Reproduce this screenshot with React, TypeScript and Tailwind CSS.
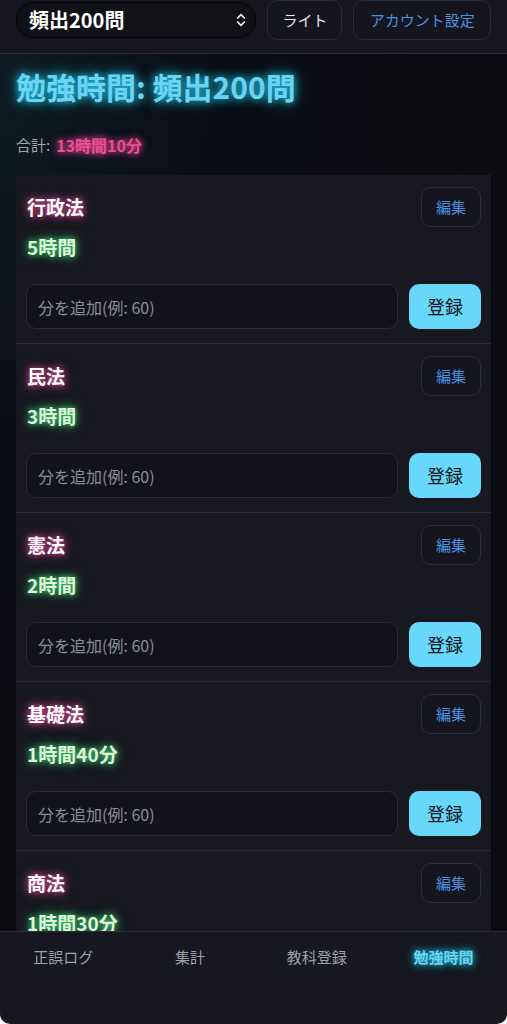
import React from "react";

const subjects = [
  { name: "行政法", time: "5時間" },
  { name: "民法", time: "3時間" },
  { name: "憲法", time: "2時間" },
  { name: "基礎法", time: "1時間40分" },
  { name: "商法", time: "1時間30分" },
];

const font = { fontFamily: '"Noto Sans CJK JP", "Noto Sans", sans-serif' };

function Card({ name, time }: { name: string; time: string }) {
  return (
    <div className="bg-[#181920] border-b border-[#2a2b36] px-[10px] pt-3 pb-[14px]">
      <div className="flex items-center justify-between h-10 pl-[1px]">
        <span className="text-[19px] font-semibold text-white [text-shadow:0_0_6px_#ec4899,0_0_12px_#ec489988]">
          {name}
        </span>
        <button className="h-10 w-[60px] rounded-[10px] border border-[#2c2e3a] text-[15px] text-[#4a8fe0] bg-[#15161d]">
          編集
        </button>
      </div>
      <div className="mt-[6px] pl-[1px] h-7 flex items-center text-[19px] font-bold text-[#dcf7d6] [text-shadow:0_0_6px_#4ade80,0_0_12px_#22c55e99]">
        {time}
      </div>
      <div className="mt-[23px] flex gap-[11px]">
        <div className="flex-1 h-[45px] rounded-[10px] border border-[#2a2b36] bg-[#12131a] flex items-center px-[11px] text-[16px] text-[#8b8d98]">
          分を追加(例: 60)
        </div>
        <button className="w-[72px] h-[45px] rounded-[10px] bg-[#67d8fa] text-[18px] text-[#11131a]">
          登録
        </button>
      </div>
    </div>
  );
}

export default function App() {
  return (
    <div style={font} className="h-[1024px] w-full overflow-hidden bg-white flex flex-col">
      <div className="flex-1 min-h-0 flex flex-col bg-[#0b0c12] overflow-hidden">
        <header className="h-[54px] shrink-0 bg-[#16171e] border-b border-[#2a2b36] flex items-start pl-4 pr-4 gap-[11px]">
          <div className="mt-[2px] w-[241px] h-[36px] rounded-full border border-[#050507] bg-[#111218] flex items-center justify-between pl-[12px] pr-[6px]">
            <span className="text-[20px] font-semibold text-white">頻出200問</span>
            <svg width="16" height="16" viewBox="0 0 24 24" fill="none" stroke="#e5e7eb" strokeWidth="2.6" strokeLinecap="round" strokeLinejoin="round">
              <path d="M7 9l5-5 5 5" />
              <path d="M7 15l5 5 5-5" />
            </svg>
          </div>
          <button className="h-[40px] w-[75px] rounded-[10px] border border-[#2a2b36] bg-[#15161d] text-[15px] text-[#e5e7eb]">
            ライト
          </button>
          <button className="h-[40px] w-[138px] rounded-[10px] border border-[#2a2b36] bg-[#15161d] text-[15px] text-[#4a8fe0]">
            アカウント設定
          </button>
        </header>
        <main className="flex-1 min-h-0 overflow-hidden bg-[radial-gradient(ellipse_at_0%_0%,#0f1c23_0%,#0c0e15_30%,#0b0c12_70%)]">
          <h1 className="px-4 mt-[13px] text-[30px] leading-[38px] font-bold text-[#6dd3f5] [text-shadow:0_0_8px_#22d3ee,0_0_16px_#06b6d488]">
            勉強時間: 頻出200問
          </h1>
          <div className="px-4 mt-[30px] h-5 flex items-center gap-[6px] text-[15px] text-[#a1a3ad]">
            <span>合計:</span>
            <span className="text-[16px] font-bold text-[#ee4d90] [text-shadow:0_0_6px_#ec4899,0_0_10px_#ec489988]">
              13時間10分
            </span>
          </div>
          <div className="ml-4 mr-4 mt-[20px]">
            {subjects.map((s) => (
              <Card key={s.name} name={s.name} time={s.time} />
            ))}
          </div>
        </main>
      </div>
      <nav className="h-[93px] shrink-0 bg-[#16171f] border-t border-[#2a2b36] rounded-b-[10px] grid grid-cols-4 items-start pt-[13px]">
        <span className="text-center text-[15px] leading-6 text-[#9ca0aa]">正誤ログ</span>
        <span className="text-center text-[15px] leading-6 text-[#9ca0aa]">集計</span>
        <span className="text-center text-[15px] leading-6 text-[#9ca0aa]">教科登録</span>
        <span className="text-center text-[15px] leading-6 font-bold text-[#6dd3f5] [text-shadow:0_0_6px_#22d3ee,0_0_12px_#06b6d488]">
          勉強時間
        </span>
      </nav>
    </div>
  );
}
